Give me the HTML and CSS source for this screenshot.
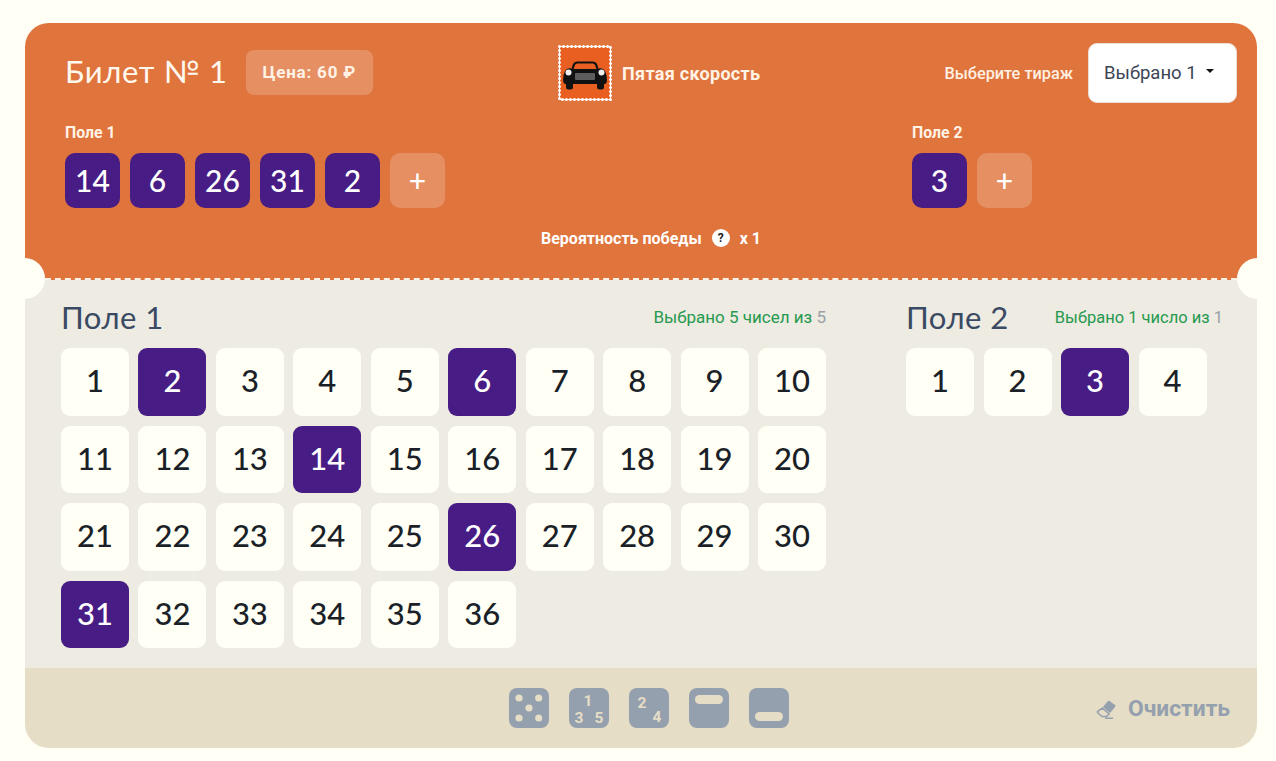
FILE: index.html
```html
<!DOCTYPE html>
<html lang="ru">
<head>
  <meta charset="UTF-8" />
  <meta name="viewport" content="width=device-width, initial-scale=1.0"/>
  <title>Билет № 1</title>
  <link rel="stylesheet" href="styles.css">
</head>
<body>
  <main class="ticket">
    <section class="head">
      <div class="head-top">
        <div class="head-left">
          <h1>Билет № 1</h1>
          <span class="price">Цена: 60 ₽</span>
        </div>
        <div class="game">
          <svg class="stamp" width="54" height="56" viewBox="0 0 54 56">
            <rect x="1.5" y="1.5" width="51" height="53" fill="#e95f22" stroke="#fff" stroke-width="3" stroke-dasharray="0.1 3.9" stroke-linecap="round"/>
            <rect x="1.5" y="1.5" width="51" height="53" fill="none" stroke="#fff" stroke-width="1"/>
            <path d="M13 25 L15 19 Q16 16.500 19 16.500 H35 Q38 16.500 39 19 L41 25 Z" fill="#111"/>
            <path d="M15.500 24 L17 20 Q17.500 18.500 19.500 18.500 H34.500 Q36.500 18.500 37 20 L38.500 24 Z" fill="#e95f22"/>
            <path d="M5 35 Q5 30 7 26 Q9 22.500 13 23.500 L16 25 H38 L41 23.500 Q45 22.500 47 26 Q49 30 49 35 Q49 38 47 39 H7 Q5 38 5 35 Z" fill="#111"/>
            <rect x="8" y="37" width="7" height="7.500" rx="2.500" fill="#111"/>
            <rect x="39" y="37" width="7" height="7.500" rx="2.500" fill="#111"/>
            <circle cx="10.500" cy="27.500" r="3" fill="#eee"/>
            <circle cx="43.500" cy="27.500" r="3" fill="#eee"/>
            <rect x="17" y="28" width="20" height="7" rx="1" fill="#5d5d5d"/>
          </svg>
          <span class="game-name">Пятая скорость</span>
        </div>
        <div class="draw">
          <span class="draw-label">Выберите тираж</span>
          <button class="draw-select">Выбрано 1<i class="caret"></i></button>
        </div>
      </div>

      <div class="picks">
        <div class="picks-group">
          <div class="picks-label">Поле 1</div>
          <div class="picks-row">
            <span class="ball">14</span>
            <span class="ball">6</span>
            <span class="ball">26</span>
            <span class="ball">31</span>
            <span class="ball">2</span>
            <span class="ball ball-add">+</span>
          </div>
        </div>
        <div class="picks-group">
          <div class="picks-label">Поле 2</div>
          <div class="picks-row">
            <span class="ball">3</span>
            <span class="ball ball-add">+</span>
          </div>
        </div>
      </div>

      <div class="chance">Вероятность победы <span class="hint">?</span> <span>x 1</span></div>
      <i class="notch notch-left"></i>
      <i class="notch notch-right"></i>
    </section>

    <section class="fields">
      <div class="field field-main">
        <div class="field-head">
          <h2>Поле 1</h2>
          <span class="status">Выбрано 5 чисел из <em>5</em></span>
        </div>
        <div class="grid grid-main">
          <button class="num">1</button>
          <button class="num on">2</button>
          <button class="num">3</button>
          <button class="num">4</button>
          <button class="num">5</button>
          <button class="num on">6</button>
          <button class="num">7</button>
          <button class="num">8</button>
          <button class="num">9</button>
          <button class="num">10</button>
          <button class="num">11</button>
          <button class="num">12</button>
          <button class="num">13</button>
          <button class="num on">14</button>
          <button class="num">15</button>
          <button class="num">16</button>
          <button class="num">17</button>
          <button class="num">18</button>
          <button class="num">19</button>
          <button class="num">20</button>
          <button class="num">21</button>
          <button class="num">22</button>
          <button class="num">23</button>
          <button class="num">24</button>
          <button class="num">25</button>
          <button class="num on">26</button>
          <button class="num">27</button>
          <button class="num">28</button>
          <button class="num">29</button>
          <button class="num">30</button>
          <button class="num on">31</button>
          <button class="num">32</button>
          <button class="num">33</button>
          <button class="num">34</button>
          <button class="num">35</button>
          <button class="num">36</button>
        </div>
      </div>
      <div class="field field-small">
        <div class="field-head">
          <h2>Поле 2</h2>
          <span class="status">Выбрано 1 число из <em>1</em></span>
        </div>
        <div class="grid grid-small">
          <button class="num">1</button>
          <button class="num">2</button>
          <button class="num on">3</button>
          <button class="num">4</button>
        </div>
      </div>
    </section>

    <section class="foot">
      <div class="tools">
        <svg class="tool" width="40" height="40" viewBox="0 0 40 40">
          <rect width="40" height="40" rx="8" fill="#94a0ae"/>
          <g fill="#e6ddc6">
            <circle cx="10" cy="10" r="3.600"/>
            <circle cx="29.700" cy="10" r="3.600"/>
            <circle cx="20" cy="20" r="3.600"/>
            <circle cx="10" cy="30" r="3.600"/>
            <circle cx="29.700" cy="30" r="3.600"/>
          </g>
        </svg>
        <svg class="tool" width="40" height="40" viewBox="0 0 40 40">
          <rect width="40" height="40" rx="8" fill="#94a0ae"/>
          <g class="tool-num">
            <text x="19" y="17.500">1</text>
            <text x="10" y="34.500">3</text>
            <text x="30" y="34.500">5</text>
          </g>
        </svg>
        <svg class="tool" width="40" height="40" viewBox="0 0 40 40">
          <rect width="40" height="40" rx="8" fill="#94a0ae"/>
          <g class="tool-num">
            <text x="13" y="19.500">2</text>
            <text x="28" y="33.500">4</text>
          </g>
        </svg>
        <svg class="tool" width="40" height="40" viewBox="0 0 40 40">
          <rect width="40" height="40" rx="8" fill="#94a0ae"/>
          <rect x="6" y="7" width="28" height="9" rx="4.500" fill="#e6ddc6"/>
        </svg>
        <svg class="tool" width="40" height="40" viewBox="0 0 40 40">
          <rect width="40" height="40" rx="8" fill="#94a0ae"/>
          <rect x="6" y="24" width="28" height="9" rx="4.500" fill="#e6ddc6"/>
        </svg>
      </div>
      <button class="clear">
        <svg width="20" height="20" viewBox="0 0 20 20">
          <path d="M7 8 L11.500 2.500 Q12.500 1.500 13.500 2 L19 6 Q20 7 19 8 L14 14 Z" fill="#94a0ae"/>
          <path d="M6.500 9 L13 15 L10.500 17.500 H6 L2 14 Q1 13 2 12 Z" fill="none" stroke="#94a0ae" stroke-width="1.600"/>
          <path d="M9 19.200 H17" stroke="#94a0ae" stroke-width="1.600"/>
        </svg>
        Очистить
      </button>
    </section>
  </main>
</body>
</html>
```

FILE: styles.css
```css
* {
  box-sizing: border-box;
}
body {
  margin: 0;
  padding: 23px 19px 13px 25px;
  background: #fffff5;
  font-family: 'Roboto', sans-serif;
}
h1, h2 {
  margin: 0;
  font-family: 'Lato', sans-serif;
  font-weight: 400;
}
button {
  border: none;
  font-family: inherit;
  cursor: pointer;
}
.ticket {
  width: 1232px;
  height: 725px;
  border-radius: 24px;
  overflow: hidden;
  display: flex;
  flex-direction: column;
}

/* шапка билета */
.head {
  position: relative;
  height: 257px;
  padding: 20px 20px 0 40px;
  background: #e0743d;
  color: #fff;
  border-bottom: 2px dashed #f7f1e6;
}
.head-top {
  display: flex;
  align-items: center;
  height: 60px;
}
.head-left {
  display: flex;
  align-items: center;
  gap: 18px;
  width: 493px;
}
.head-left h1 {
  margin: -4px 0 0 0;
  font-size: 31px;
  letter-spacing: 0.7px;
  color: #fff8ee;
}
.price {
  width: 127px;
  height: 45px;
  margin-top: -2px;
  line-height: 45px;
  text-align: center;
  background: rgba(255,255,255,0.2);
  border-radius: 8px;
  font-size: 17px;
  font-weight: 700;
  letter-spacing: 0.8px;
  color: #fff3e6;
}
.game {
  display: flex;
  align-items: center;
  gap: 10px;
}
.stamp {
  display: block;
}
.game-name {
  font-size: 18px;
  font-weight: 700;
  letter-spacing: 0.3px;
  color: #fff3e6;
}
.draw {
  margin-left: auto;
  display: flex;
  align-items: center;
  gap: 15px;
}
.draw-label {
  font-size: 16.300px;
  font-weight: 500;
  color: #fff0e2;
}
.draw-select {
  width: 149px;
  height: 60px;
  padding: 0 0 0 15px;
  display: flex;
  align-items: center;
  background: #fff;
  border: 1px solid #eadfd6;
  border-radius: 9px;
  font-size: 18.500px;
  color: #3c4556;
}
.caret {
  margin: -4px 0 0 9px;
  border-left: 4px solid transparent;
  border-right: 4px solid transparent;
  border-top: 4px solid #111;
}
.picks {
  display: flex;
  margin-top: 20px;
}
.picks-group:first-child {
  width: 847px;
}
.picks-label {
  height: 20px;
  line-height: 20px;
  font-size: 15.800px;
  font-weight: 700;
  color: #fff3e6;
}
.picks-row {
  display: flex;
  gap: 10px;
  margin-top: 10px;
}
.ball {
  width: 55px;
  height: 55px;
  padding-bottom: 1px;
  display: flex;
  align-items: center;
  justify-content: center;
  background: #471c85;
  border-radius: 10px;
  font-family: 'Lato', sans-serif;
  font-size: 30px;
  font-weight: 500;
}
.ball-add {
  background: rgba(255,255,255,0.2);
}
.chance {
  margin-top: 20px;
  display: flex;
  align-items: center;
  justify-content: center;
  gap: 9px;
  height: 20px;
  font-size: 16px;
  font-weight: 700;
}
.hint {
  width: 18px;
  height: 18px;
  margin: 0 1px;
  border-radius: 50%;
  background: #fff;
  color: #222;
  font-size: 12px;
  line-height: 18px;
  text-align: center;
}
.notch {
  position: absolute;
  top: 235px;
  width: 41px;
  height: 41px;
  border-radius: 50%;
  background: #fffff5;
}
.notch-left {
  left: -21px;
}
.notch-right {
  right: -21px;
}

/* поля с числами */
.fields {
  display: flex;
  height: 388px;
  padding: 16px 0 0 36px;
  background: #edebe2;
}
.field-main {
  width: 765px;
  margin-right: 80px;
}
.field-small {
  width: 317px;
}
.field-head {
  display: flex;
  align-items: center;
  justify-content: space-between;
  height: 42px;
  margin-bottom: 10px;
}
.field-head h2 {
  font-size: 31px;
  letter-spacing: 0.5px;
  color: #3a4a62;
}
.status {
  font-size: 17px;
  color: #27994f;
}
.field-small .status {
  font-size: 16.500px;
}
.status em {
  font-style: normal;
  color: #9aa0a6;
}
.grid {
  display: grid;
  grid-auto-rows: 67.500px;
  column-gap: 9.500px;
  row-gap: 10px;
}
.grid-main {
  grid-template-columns: repeat(10, 1fr);
}
.grid-small {
  grid-template-columns: repeat(4, 68px);
}
.num {
  padding: 0 0 3px;
  background: #fffff5;
  border-radius: 9px;
  font-family: 'Lato', sans-serif;
  font-size: 31px;
  font-weight: 500;
  color: #1a1f28;
}
.num.on {
  background: #471c85;
  color: #fff;
}

/* нижняя панель */
.foot {
  position: relative;
  flex: 1;
  display: flex;
  align-items: center;
  justify-content: center;
  padding-left: 16px;
  background: #e6ddc6;
}
.tools {
  display: flex;
  gap: 20px;
}
.tool {
  display: block;
}
.tool-num {
  font-family: 'Roboto', sans-serif;
  font-size: 15.500px;
  font-weight: 700;
  fill: #e6ddc6;
  text-anchor: middle;
}
.clear {
  position: absolute;
  right: 27px;
  top: 27px;
  display: flex;
  align-items: center;
  gap: 12px;
  padding: 0;
  background: none;
  font-size: 22.800px;
  font-weight: 700;
  color: #94a0ae;
}
```
